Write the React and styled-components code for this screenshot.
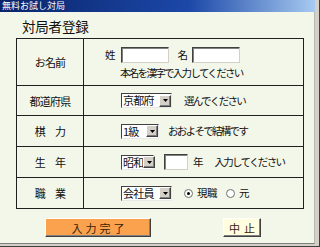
import styled, { createGlobalStyle } from 'styled-components'

const Global = createGlobalStyle`
  html, body {
    margin: 0;
    padding: 0;
    background: #d4d0c8;
  }
  body {
    font-family: "Noto Sans CJK JP", "MS UI Gothic", sans-serif;
    color: #101010;
  }
`

const Frame = styled.div`
  width: 320px;
  height: 247px;
  box-sizing: border-box;
  display: flex;
  flex-direction: column;
  background: #d4d0c8;
  border-right: 1px solid #404040;
  border-bottom: 1px solid #404040;
  padding: 0 4px 2px 0;
  overflow: hidden;
`

const TitleBar = styled.div`
  height: 12px;
  flex-shrink: 0;
  background: linear-gradient(to right, #0a246a 0%, #1c48a8 60%, #a6caf0 100%);
  color: #fff;
  font-size: 9px;
  line-height: 12px;
  padding-left: 2px;
  white-space: nowrap;
`

const Body = styled.div`
  flex: 1;
  background: #f3f7e9;
  border-right: 1px solid #b8b8b0;
  border-bottom: 1px solid #808080;
  padding: 5px 0 0 16px;
  display: flex;
  flex-direction: column;
`

const Heading = styled.h1`
  margin: 0 0 0 6px;
  height: 21px;
  font-size: 13.5px;
  font-weight: 400;
  line-height: 18px;
  letter-spacing: -0.2px;
`

const Table = styled.div`
  width: 288px;
  box-sizing: border-box;
  border: 1px solid #202020;
  display: grid;
  grid-template-columns: 67px 1fr;
`

const Label = styled.div`
  height: ${p => p.$h}px;
  border-right: 1px solid #202020;
  border-top: ${p => (p.$first ? 'none' : '1px solid #202020')};
  display: flex;
  align-items: center;
  justify-content: center;
  font-size: 11px;
  letter-spacing: -0.8px;
  white-space: pre;
`

const Cell = styled.div`
  height: ${p => p.$h}px;
  border-top: ${p => (p.$first ? 'none' : '1px solid #202020')};
  display: flex;
  flex-direction: ${p => (p.$column ? 'column' : 'row')};
  justify-content: ${p => (p.$column ? 'center' : 'flex-start')};
  align-items: ${p => (p.$column ? 'flex-start' : 'center')};
  padding-left: ${p => p.$pad}px;
  white-space: nowrap;
`

const Line = styled.div`
  display: flex;
  align-items: center;
  margin-left: ${p => p.$indent || 0}px;
  margin-top: ${p => p.$top || 0}px;
`

const Text = styled.span`
  font-size: 10.5px;
  line-height: 14px;
  margin-left: ${p => p.$ml || 0}px;
  margin-right: ${p => p.$mr || 0}px;
  letter-spacing: ${p => (p.$ls === undefined ? -1.7 : p.$ls)}px;
`

const TextInput = styled.div`
  width: ${p => p.$w}px;
  height: 14px;
  margin-left: ${p => p.$ml || 0}px;
  background: #fff;
  border: 1px solid;
  border-color: #404040 #d4d0c8 #d4d0c8 #404040;
  box-shadow: inset 1px 1px #808080;
`

const SelectBox = styled.div`
  width: ${p => p.$w}px;
  height: 15px;
  box-sizing: border-box;
  background: #fff;
  border: 1px solid;
  border-color: #404040 #e8e8e8 #e8e8e8 #404040;
  display: flex;
  align-items: center;
  justify-content: space-between;
  padding-left: 1px;
  font-size: 11px;
  line-height: 13px;
  letter-spacing: -0.8px;
`

const DropButton = styled.div`
  width: 12px;
  height: 12px;
  flex-shrink: 0;
  box-sizing: border-box;
  background: #d4d0c8;
  border: 1px solid;
  border-color: #fff #404040 #404040 #fff;
  box-shadow: inset -1px -1px #808080;
  display: flex;
  align-items: center;
  justify-content: center;
`

const Radio = styled.span`
  width: 7px;
  height: 7px;
  border-radius: 50%;
  border: 1px solid #707070;
  background: #fff;
  display: inline-flex;
  align-items: center;
  justify-content: center;
  margin-right: 4px;
  margin-left: ${p => p.$ml || 0}px;

  &::after {
    content: '';
    width: 3px;
    height: 3px;
    border-radius: 50%;
    background: ${p => (p.$checked ? '#000' : 'transparent')};
  }
`

const Buttons = styled.div`
  display: flex;
  margin: 9px 0 0 29px;
  gap: 72px;
`

const Button = styled.div`
  width: ${p => p.$w}px;
  height: 19px;
  box-sizing: border-box;
  background: ${p => p.$bg};
  border: 1px solid;
  border-color: #ffffff #404040 #404040 #ffffff;
  box-shadow: inset -1px -1px #808080;
  display: flex;
  align-items: center;
  justify-content: center;
  padding-left: ${p => p.$ls}px;
  font-size: 11px;
  letter-spacing: ${p => p.$ls}px;
  color: #3a2408;
`

function Select({ width, value }) {
  return (
    <SelectBox $w={width}>
      <span>{value}</span>
      <DropButton>
        <svg width="5" height="3" viewBox="0 0 5 3">
          <path d="M0 0h5L2.5 3z" fill="#000" />
        </svg>
      </DropButton>
    </SelectBox>
  )
}

export default function App() {
  return (
    <>
      <Global />
      <Frame>
        <TitleBar>無料お試し対局</TitleBar>
        <Body>
          <Heading>対局者登録</Heading>
          <Table>
            <Label $h={46} $first>お名前</Label>
            <Cell $h={46} $first $column $pad={21}>
              <Line $top={2}>
                <Text $mr={5} $ls={0}>姓</Text>
                <TextInput $w={46} />
                <Text $ml={9} $mr={4} $ls={0}>名</Text>
                <TextInput $w={46} />
              </Line>
              <Line $indent={15} $top={3}>
                <Text>本名を漢字で入力してください</Text>
              </Line>
            </Cell>

            <Label $h={29}>都道府県</Label>
            <Cell $h={29} $pad={37}>
              <Select width={51} value="京都府" />
              <Text $ml={12}>選んでください</Text>
            </Cell>

            <Label $h={30}>{'棋　力'}</Label>
            <Cell $h={30} $pad={37}>
              <Select width={38} value="1級" />
              <Text $ml={9}>おおよそで結構です</Text>
            </Cell>

            <Label $h={30}>{'生　年'}</Label>
            <Cell $h={30} $pad={37}>
              <Select width={33} value="昭和" />
              <TextInput $w={22} $ml={10} />
              <Text $ml={5} $ls={0}>年</Text>
              <Text $ml={11}>入力してください</Text>
            </Cell>

            <Label $h={30}>{'職　業'}</Label>
            <Cell $h={30} $pad={37}>
              <Select width={51} value="会社員" />
              <Radio $ml={12} $checked />
              <Text $ls={-0.5}>現職</Text>
              <Radio $ml={9} />
              <Text $ls={0}>元</Text>
            </Cell>
          </Table>
          <Buttons>
            <Button $w={106} $bg="#fba24e" $ls={3}>入力完了</Button>
            <Button $w={38} $bg="#ffffe0" $ls={4}>中止</Button>
          </Buttons>
        </Body>
      </Frame>
    </>
  )
}
